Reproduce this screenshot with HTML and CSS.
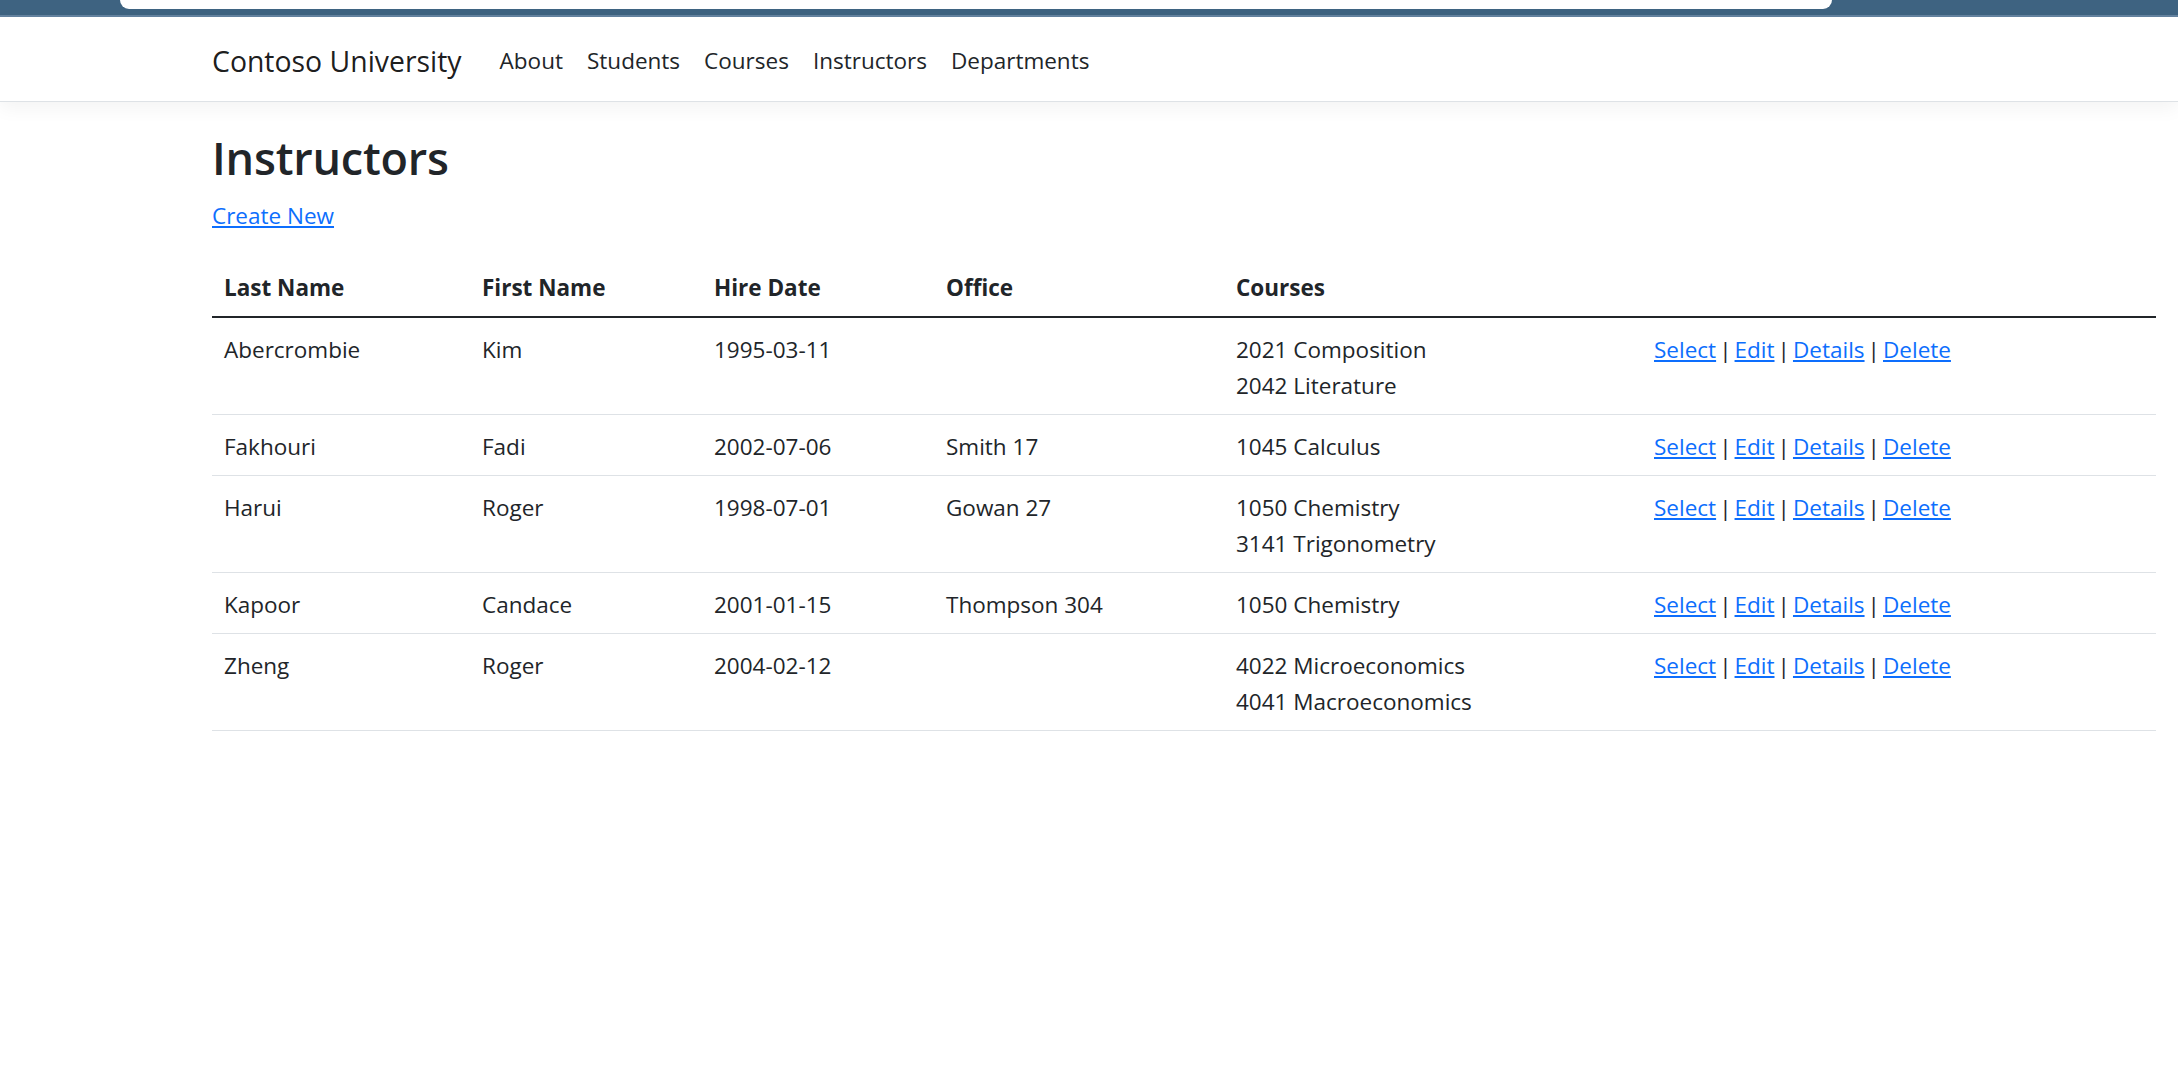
FILE: index.html
```html
<!DOCTYPE html>
<html lang="en">
<head>
<meta charset="utf-8">
<title>Instructors - Contoso University</title>
<link rel="stylesheet" href="styles.css">
</head>
<body>
<div class="topbar"><div class="topbar-pill"></div></div>
<header class="navbar">
  <div class="nav-inner">
    <a class="brand" href="#">Contoso University</a>
    <nav class="nav-links">
      <a class="nav-link" href="#">About</a>
      <a class="nav-link" href="#">Students</a>
      <a class="nav-link" href="#">Courses</a>
      <a class="nav-link" href="#">Instructors</a>
      <a class="nav-link" href="#">Departments</a>
    </nav>
  </div>
</header>
<main class="main">
  <h1 class="title">Instructors</h1>
  <p class="create"><a href="#">Create New</a></p>
  <table class="table">
    <colgroup>
      <col class="c-last"><col class="c-first"><col class="c-hire"><col class="c-office"><col class="c-courses"><col class="c-actions">
    </colgroup>
    <thead>
      <tr><th>Last Name</th><th>First Name</th><th>Hire Date</th><th>Office</th><th>Courses</th><th></th></tr>
    </thead>
    <tbody>
      <tr>
        <td>Abercrombie</td><td>Kim</td><td>1995-03-11</td><td></td>
        <td>2021 Composition<br>2042 Literature</td>
        <td class="actions"><a href="#">Select</a> | <a href="#">Edit</a> | <a href="#">Details</a> | <a href="#">Delete</a></td>
      </tr>
      <tr>
        <td>Fakhouri</td><td>Fadi</td><td>2002-07-06</td><td>Smith 17</td>
        <td>1045 Calculus</td>
        <td class="actions"><a href="#">Select</a> | <a href="#">Edit</a> | <a href="#">Details</a> | <a href="#">Delete</a></td>
      </tr>
      <tr>
        <td>Harui</td><td>Roger</td><td>1998-07-01</td><td>Gowan 27</td>
        <td>1050 Chemistry<br>3141 Trigonometry</td>
        <td class="actions"><a href="#">Select</a> | <a href="#">Edit</a> | <a href="#">Details</a> | <a href="#">Delete</a></td>
      </tr>
      <tr>
        <td>Kapoor</td><td>Candace</td><td>2001-01-15</td><td>Thompson 304</td>
        <td>1050 Chemistry</td>
        <td class="actions"><a href="#">Select</a> | <a href="#">Edit</a> | <a href="#">Details</a> | <a href="#">Delete</a></td>
      </tr>
      <tr>
        <td>Zheng</td><td>Roger</td><td>2004-02-12</td><td></td>
        <td>4022 Microeconomics<br>4041 Macroeconomics</td>
        <td class="actions"><a href="#">Select</a> | <a href="#">Edit</a> | <a href="#">Details</a> | <a href="#">Delete</a></td>
      </tr>
    </tbody>
  </table>
</main>
</body>
</html>
```
FILE: styles.css
```css
html, body {
  margin: 0;
  padding: 0;
  background: #ffffff;
}
body {
  font-family: "Open Sans", "Noto Sans", sans-serif;
  font-size: 22.5px;
  line-height: 36px;
  color: #212529;
}
a {
  color: #0d6efd;
  text-decoration: underline;
}

.topbar {
  height: 15px;
  background: #3e6381;
  border-bottom: 2px solid #6483a0;
  display: flex;
  align-items: flex-start;
}
.topbar-pill {
  margin-left: 120px;
  width: 1712px;
  height: 9px;
  background: #ffffff;
  border-radius: 0 0 9px 9px;
}

.navbar {
  height: 84px;
  border-bottom: 1px solid #dee2e6;
  box-shadow: 0 6px 18px rgba(0, 0, 0, 0.05);
  background: #ffffff;
}
.nav-inner {
  height: 100%;
  box-sizing: border-box;
  padding: 4px 0 0 212px;
  display: flex;
  align-items: center;
}
.brand {
  font-size: 28.4px;
  line-height: 42px;
  color: rgba(0, 0, 0, 0.9);
  text-decoration: none;
  margin-right: 26px;
}
.nav-links {
  display: flex;
}
.nav-link {
  color: #212529;
  text-decoration: none;
  padding: 0 12px;
  font-size: 22.5px;
  line-height: 36px;
}

.main {
  padding: 27px 22px 0 212px;
}
.title {
  margin: 0 0 11px 0;
  font-size: 45px;
  line-height: 58px;
  font-weight: 600;
  letter-spacing: -0.2px;
}
.create {
  margin: 0 0 22px 0;
}

.table {
  width: 100%;
  table-layout: fixed;
  border-collapse: collapse;
}
.c-last { width: 258px; }
.c-first { width: 232px; }
.c-hire { width: 232px; }
.c-office { width: 290px; }
.c-courses { width: 418px; }
.c-actions { width: 514px; }

.table th,
.table td {
  padding: 14px 12px 10px 12px;
  text-align: left;
  vertical-align: top;
}
.table th {
  font-weight: 700;
  border-bottom: 2px solid #212529;
}
.table td {
  border-bottom: 1px solid #dee2e6;
}
.actions {
  word-spacing: -2.8px;
}
```
